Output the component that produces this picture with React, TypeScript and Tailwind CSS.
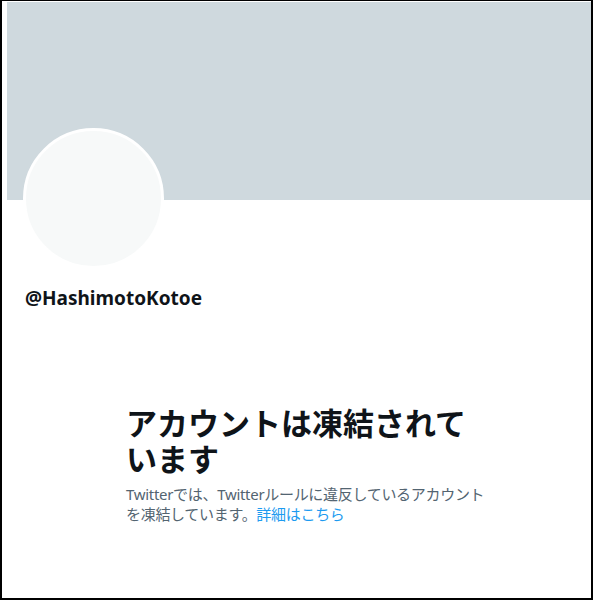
const latin = '"Noto Sans", "Noto Sans CJK JP", sans-serif'

const App = () => {
  return (
    <div
      className="h-[600px] w-[593px] border-b-2 border-l-2 border-r-2 border-t border-black bg-white pl-[5px] pt-[1px]"
      style={{ fontFamily: latin }}
    >
      <div className="h-[198px] bg-[#cfd9de]" />
      <div className="-mt-[72px] ml-[16px] h-[141px] w-[141px] rounded-full border-[3px] border-white bg-[#f7f9f9]" />

      <p className="mt-[17px] pl-[18px] text-[19px] font-bold leading-6 text-[#0f1419]">@HashimotoKotoe</p>

      <div className="ml-[119px] mt-[95px] w-[362px]">
        <h2 className="text-[31px] font-bold leading-[36px] text-[#0f1419]">アカウントは凍結されています</h2>
        <p className="mt-[7px] text-[15px] leading-5 tracking-[-0.3px] text-[#536471]">
          Twitterでは、Twitterルールに違反しているアカウントを凍結しています。
          <span className="text-[#1d9bf0]">詳細はこちら</span>
        </p>
      </div>
    </div>
  )
}

export default App
